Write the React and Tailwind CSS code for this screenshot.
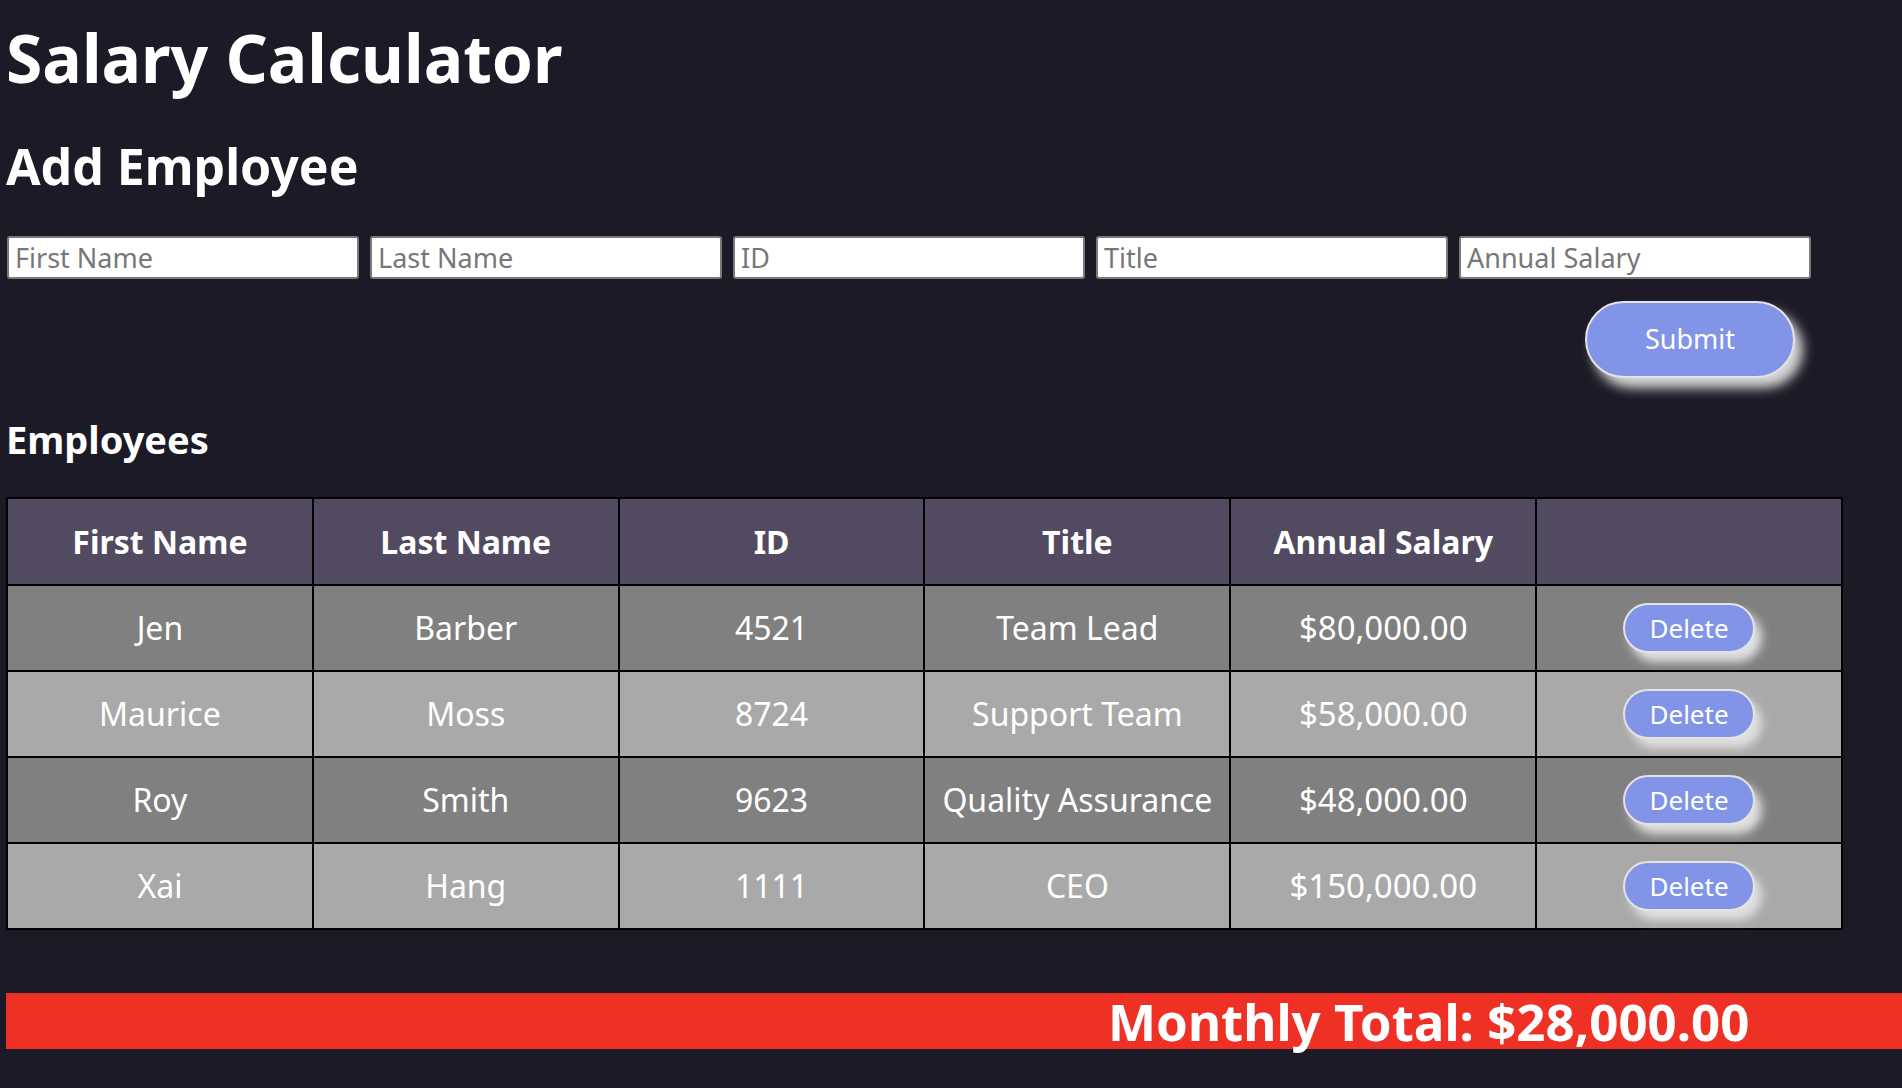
import React from 'react';

const employees = [
  { first: 'Jen', last: 'Barber', id: '4521', title: 'Team Lead', salary: '$80,000.00' },
  { first: 'Maurice', last: 'Moss', id: '8724', title: 'Support Team', salary: '$58,000.00' },
  { first: 'Roy', last: 'Smith', id: '9623', title: 'Quality Assurance', salary: '$48,000.00' },
  { first: 'Xai', last: 'Hang', id: '1111', title: 'CEO', salary: '$150,000.00' },
];

const fields = ['First Name', 'Last Name', 'ID', 'Title', 'Annual Salary'];
const headers = ['First Name', 'Last Name', 'ID', 'Title', 'Annual Salary', ''];

export default function App() {
  return (
    <div className="min-h-screen w-full overflow-hidden bg-[#1b1a26] text-white font-['Noto_Sans',sans-serif]">
      <div className="pl-[6px]">
        <h1 className="pt-[24px] text-[66px] font-bold leading-none">Salary Calculator</h1>
        <h2 className="mt-[51px] text-[50px] font-bold leading-none">Add Employee</h2>

        <div className="mt-[45px] ml-px flex gap-[11px]">
          {fields.map((f) => (
            <input
              key={f}
              placeholder={f}
              className="h-[43px] w-[352px] rounded-[3px] border-2 border-[#7a7a7a] bg-white px-[6px] text-[27px] text-black placeholder:text-[#777777] outline-none"
            />
          ))}
        </div>

        <div className="mt-[22px] flex w-[1789px] justify-end">
          <button className="h-[77px] w-[210px] rounded-full border-2 border-[#e4e4e4] bg-[#8194e8] text-[27px] text-white shadow-[8px_10px_12px_#d8d8d8]">
            Submit
          </button>
        </div>

        <h3 className="mt-[42px] text-[38px] font-bold leading-none">Employees</h3>

        <table className="mt-[39px] w-[1837px] table-fixed border-collapse border-2 border-black text-center">
          <thead>
            <tr className="h-[87px] bg-[#524a60]">
              {headers.map((h, i) => (
                <th key={i} className="border-2 border-black text-[32px] font-bold">
                  {h}
                </th>
              ))}
            </tr>
          </thead>
          <tbody>
            {employees.map((e, i) => (
              <tr key={e.id} className={`h-[86px] ${i % 2 === 0 ? 'bg-[#808080]' : 'bg-[#a9a9a9]'}`}>
                <td className="border-2 border-black text-[32px]">{e.first}</td>
                <td className="border-2 border-black text-[32px]">{e.last}</td>
                <td className="border-2 border-black text-[32px]">{e.id}</td>
                <td className="border-2 border-black text-[32px]">{e.title}</td>
                <td className="border-2 border-black text-[33px]">{e.salary}</td>
                <td className="border-2 border-black">
                  <button className="h-[50px] w-[132px] rounded-full border-2 border-[#e4e4e4] bg-[#8194e8] text-[26px] text-white shadow-[7px_9px_10px_#e0e0e0]">
                    Delete
                  </button>
                </td>
              </tr>
            ))}
          </tbody>
        </table>

        <div className="mt-[63px] mb-[40px] flex h-[56px] items-center bg-[#ee3124] pl-[1102px]">
          <span className="text-[51px] font-bold leading-none whitespace-nowrap">Monthly Total: $28,000.00</span>
        </div>
      </div>
    </div>
  );
}
